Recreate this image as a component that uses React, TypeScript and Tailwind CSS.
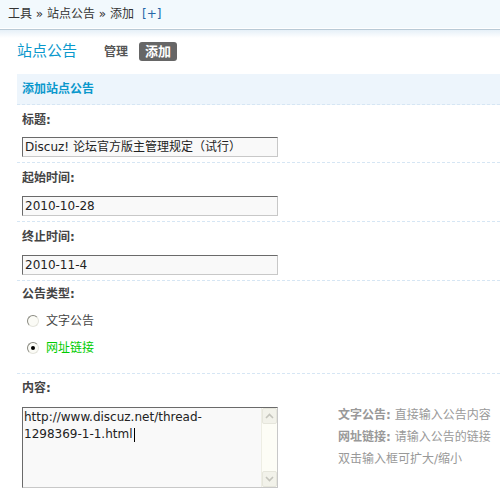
import React from "react";

const cjk = '"DejaVu Sans", "Noto Sans CJK SC", sans-serif';

function Radio({ checked }: { checked?: boolean }) {
  return (
    <span className="relative inline-flex h-[12px] w-[12px] items-center justify-center rounded-full border border-t-[#8a8a80] border-l-[#8a8a80] border-r-[#e4e4dc] border-b-[#e4e4dc] bg-[#fbfbf6]">
      {checked && <span className="h-[4px] w-[4px] rounded-full bg-black" />}
    </span>
  );
}

function Field({ value }: { value: string }) {
  return (
    <div className="flex h-[20px] w-[256px] items-center overflow-hidden whitespace-nowrap border border-t-[#6a6a6a] border-l-[#6a6a6a] border-r-[#c8c8c8] border-b-[#c8c8c8] bg-[#f9f9f9] pl-[2px] text-[12px] text-[#222]">
      {value}
    </div>
  );
}

function Label({ children, h = "h-[29px]" }: { children: React.ReactNode; h?: string }) {
  return (
    <div className={`flex ${h} items-center pl-[5px] text-[12px] font-bold text-[#444]`}>{children}</div>
  );
}

function Chevron({ up }: { up?: boolean }) {
  return (
    <svg width="9" height="6" viewBox="0 0 9 6">
      <path
        d={up ? "M1 5 L4.5 1.5 L8 5" : "M1 1 L4.5 4.5 L8 1"}
        fill="none"
        stroke="#c4c4bc"
        strokeWidth="1.6"
      />
    </svg>
  );
}

export default function App() {
  return (
    <div className="w-[500px] overflow-hidden bg-white text-[12px] text-[#333]" style={{ fontFamily: cjk }}>
      {/* breadcrumb */}
      <div className="flex h-[28px] items-center bg-[#f2f9fd] pl-[8px] text-[12px] text-[#333]">
        <span>工具 » 站点公告 » 添加</span>
        <span className="ml-[8px] text-[#2366a8]">[+]</span>
      </div>
      <div className="h-[1px] bg-white" />
      <div className="h-[1px] bg-[#b9cad6]" />
      <div className="h-[8px] bg-gradient-to-b from-[#e6f0f8] to-white" />

      {/* title + tabs */}
      <div className="flex h-[27px] items-center pl-[17px]">
        <span className="text-[15px] text-[#0a98cc]">站点公告</span>
        <span className="ml-[27px] text-[12px] font-bold text-[#555]">管理</span>
        <span className="ml-[11px] flex h-[19px] items-center rounded-[3px] bg-[#666] px-[6px] text-[13px] font-bold text-white">
          添加
        </span>
      </div>
      <div className="h-[9px]" />

      <div className="ml-[17px]">
        <div className="flex h-[31px] items-center border-b border-dashed border-[#d6e6f4] bg-[#edf5fc] pl-[5px] text-[12px] font-bold text-[#0a98cc]">
          添加站点公告
        </div>

        <div className="border-b border-dashed border-[#d6e6f4]">
          <Label>标题:</Label>
          <div className="pl-[5px] pt-[3px] pb-[5px]">
            <Field value="Discuz! 论坛官方版主管理规定（试行）" />
          </div>
        </div>

        <div className="border-b border-dashed border-[#d6e6f4]">
          <Label>起始时间:</Label>
          <div className="pl-[5px] pt-[4px] pb-[5px]">
            <Field value="2010-10-28" />
          </div>
        </div>

        <div className="border-b border-dashed border-[#d6e6f4]">
          <Label>终止时间:</Label>
          <div className="pl-[5px] pt-[4px] pb-[5px]">
            <Field value="2010-11-4" />
          </div>
        </div>

        <div className="border-b border-dashed border-[#d6e6f4]">
          <Label h="h-[26px]">公告类型:</Label>
          <div className="pb-[12px] pl-[10px]">
            <div className="flex h-[27px] items-center gap-[7px]">
              <Radio />
              <span className="text-[12px] text-[#444]">文字公告</span>
            </div>
            <div className="flex h-[27px] items-center gap-[7px]">
              <Radio checked />
              <span className="text-[12px] text-[#00cc00]">网址链接</span>
            </div>
          </div>
        </div>

        <Label h="h-[27px]">内容:</Label>
        <div className="flex pl-[5px] pt-[6px]">
          <div className="flex h-[81px] w-[256px] shrink-0 border border-t-[#6a6a6a] border-l-[#6a6a6a] border-r-[#c8c8c8] border-b-[#c8c8c8] bg-[#f9f9f9]">
            <div className="flex-1 pl-[1px] pt-[1px] text-[12px] leading-[17px] text-[#222]">
              <div>http://www.discuz.net/thread-</div>
              <div className="flex items-center">
                1298369-1-1.html<span className="ml-[1px] inline-block h-[14px] w-[1px] bg-black" />
              </div>
            </div>
            <div className="flex w-[16px] flex-col justify-between border-l border-[#eeeee4] bg-[#fdfdf6]">
              <div className="flex h-[16px] items-center justify-center rounded-[2px] border border-[#e6e6dc] bg-[#f2f2ea]">
                <Chevron up />
              </div>
              <div className="flex h-[16px] items-center justify-center rounded-[2px] border border-[#e6e6dc] bg-[#f2f2ea]">
                <Chevron />
              </div>
            </div>
          </div>
          <div className="ml-[60px] shrink-0 whitespace-nowrap text-[12px] leading-[22px] text-[#999]">
            <div className="-mt-[3px]">
              <b>文字公告:</b> 直接输入公告内容
            </div>
            <div>
              <b>网址链接:</b> 请输入公告的链接
            </div>
            <div>双击输入框可扩大/缩小</div>
          </div>
        </div>
        <div className="h-[8px]" />
      </div>
    </div>
  );
}
